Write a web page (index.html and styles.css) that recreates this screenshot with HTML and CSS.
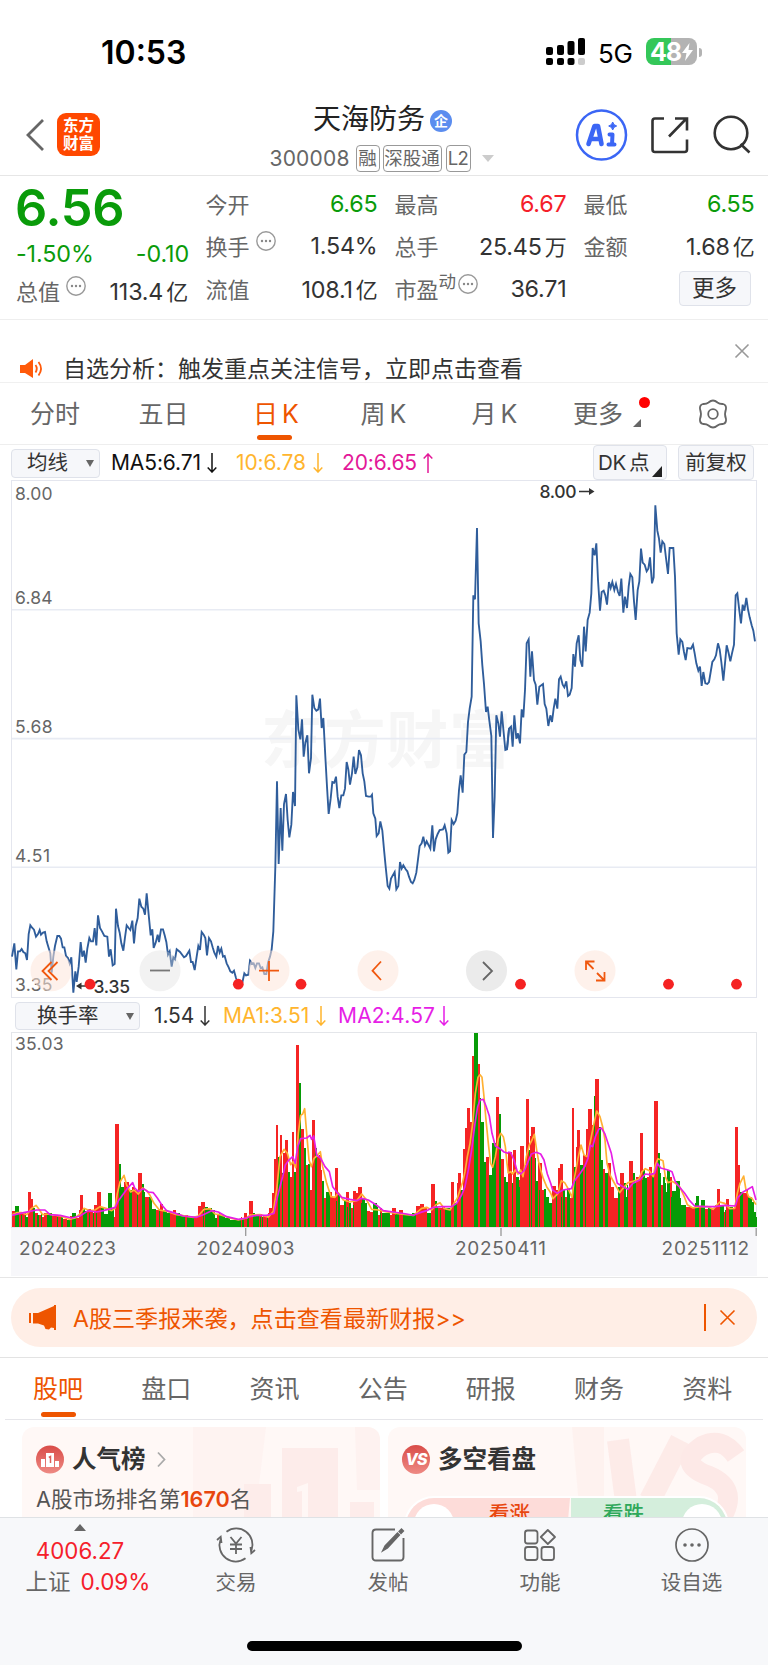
FILE: index.html
```html
<!DOCTYPE html>
<html lang="zh-CN">
<head>
<meta charset="utf-8">
<title>天海防务 300008</title>
<link rel="stylesheet" href="styles.css">
</head>
<body>
<svg class="defs" width="0" height="0">
  <symbol id="dots" viewBox="0 0 20 20"><circle cx="10" cy="10" r="9.200" fill="none" stroke="#999" stroke-width="1.400"/><circle cx="6" cy="10" r="1.200" fill="#888"/><circle cx="10" cy="10" r="1.200" fill="#888"/><circle cx="14" cy="10" r="1.200" fill="#888"/></symbol>
  <symbol id="down" viewBox="0 0 10 20"><path d="M5 0V19M.7 14.5L5 19L9.3 14.5" fill="none" stroke="currentColor" stroke-width="1.500"/></symbol>
  <symbol id="up" viewBox="0 0 10 20"><path d="M5 20V1M.7 5.500L5 1L9.300 5.500" fill="none" stroke="currentColor" stroke-width="1.500"/></symbol>
</svg>
<div class="screen">
  <header class="status">
    <span class="clock">10:53</span>
    <svg class="signal" width="40" height="28" viewBox="0 0 40 28"><g fill="#000"><rect x="0" y="9" width="7" height="8" rx="2"/><rect x="11" y="7" width="7" height="10" rx="2"/><rect x="21.500" y="3" width="7" height="14" rx="2"/><rect x="32" y="0" width="7" height="17" rx="2"/><rect x="0" y="20" width="7" height="7" rx="2"/><rect x="11" y="20" width="7" height="7" rx="2"/><rect x="21.500" y="20" width="7" height="7" rx="2"/></g><rect x="32" y="20" width="7" height="7" rx="2" fill="#ccc"/></svg>
    <span class="net">5G</span>
    <span class="battery">48<svg width="11" height="20" viewBox="0 0 11 18"><path d="M7.500 0L0 10H4.500L3 18L11 7H6.500Z" fill="#fff"/></svg></span><i class="cap"></i>
  </header>

  <header class="head">
    <svg class="back" width="19" height="32" viewBox="0 0 19 32"><path d="M17 1L2 16L17 31" fill="none" stroke="#666" stroke-width="2.800"/></svg>
    <div class="logo"><span>东方</span><span>财富</span></div>
    <div class="title">
      <div class="name">天海防务<span class="qi">企</span></div>
      <div class="code"><span class="num">300008</span><span class="tag">融</span><span class="tag tag-w">深股通</span><span class="tag tag-l">L2</span><i class="tri"></i></div>
    </div>
    <svg class="acts" width="180" height="56" viewBox="572 107 180 56">
      <circle cx="601.5" cy="135" r="24.500" fill="#fff" stroke="#3b66f5" stroke-width="2.500"/>
      <g fill="none" stroke="#3b66f5" stroke-linejoin="round" stroke-linecap="round"><path d="M588.500 144L594.500 126H598L601.500 144M591.500 139H600" stroke-width="4.600"/><path d="M609.500 134.500H612.500L612 144.500M608.500 144.500H614.500" stroke-width="4"/></g>
      <path d="M612.700 122Q613.400 125.300 616.700 126Q613.400 126.700 612.700 130Q612 126.700 608.700 126Q612 125.300 612.700 122Z" fill="#3b66f5" stroke="#3b66f5"/>
      <g fill="none" stroke="#333" stroke-width="2.600"><path d="M664 118.500H655Q652.500 118.500 652.500 121V149.500Q652.500 152 655 152H684.500Q687 152 687 149.500V139.500M669 136.500L686 119M675 118.500H687V130.500"/><circle cx="731" cy="133" r="16.300"/><path d="M740.500 144L749.500 152.500"/></g>
    </svg>
  </header>

  <section class="quote">
    <div class="q-main">
      <div class="price">6.56</div>
      <div class="chg"><span>-1.50%</span><span>-0.10</span></div>
      <div class="cell q-cap"><span class="lb">总值<svg class="ell" width="20" height="20"><use href="#dots"/></svg></span><b>113.4<em>亿</em></b></div>
    </div>
    <div class="q-grid">
      <div class="cell"><span class="lb">今开</span><b class="g">6.65</b></div>
      <div class="cell"><span class="lb">最高</span><b class="r">6.67</b></div>
      <div class="cell"><span class="lb">最低</span><b class="g">6.55</b></div>
      <div class="cell"><span class="lb">换手<svg class="ell" width="20" height="20"><use href="#dots"/></svg></span><b>1.54%</b></div>
      <div class="cell"><span class="lb">总手</span><b>25.45<em>万</em></b></div>
      <div class="cell"><span class="lb">金额</span><b>1.68<em>亿</em></b></div>
      <div class="cell"><span class="lb">流值</span><b>108.1<em>亿</em></b></div>
      <div class="cell"><span class="lb">市盈<sup>动</sup><svg class="ell ell-t" width="20" height="20"><use href="#dots"/></svg></span><b>36.71</b></div>
      <div class="cell cell-btn"><span class="more">更多</span></div>
    </div>
  </section>

  <section class="notice">
    <svg class="spk" width="24" height="20" viewBox="0 0 24 20"><path d="M0 6H5L13 0V19L5 14H0Z" fill="#ff5a0a"/><path d="M15.500 6Q18 9.500 15.500 13.500M18.500 3Q23.500 9.500 18.500 16.500" fill="none" stroke="#ff5a0a" stroke-width="1.800"/></svg>
    <span class="n-text">自选分析：触发重点关注信号，立即点击查看</span>
    <svg class="n-x" width="14" height="14" viewBox="0 0 14 14"><path d="M.5 .5L13.500 13.500M13.500 .5L.5 13.500" stroke="#999" stroke-width="1.600"/></svg>
  </section>

  <nav class="periods">
    <span>分时</span><span>五日</span><span class="on">日<i class="k">K</i></span><span>周<i class="k">K</i></span><span>月<i class="k">K</i></span><span class="p-more">更多<i class="corner"></i><i class="red"></i></span>
    <svg class="gear" width="30" height="30" viewBox="-15 -15 30 30"><path d="M-4.500 -11.500Q0 -15.500 4.500 -11.500Q6.500 -9.800 10 -10Q13.500 -9 13 -5Q11 0 13 5Q13.500 9 10 10Q6.500 9.800 4.500 11.500Q0 15.500 -4.500 11.500Q-6.500 9.800 -10 10Q-13.500 9 -13 5Q-11 0 -13 -5Q-13.500 -9 -10 -10Q-6.500 -9.800 -4.500 -11.500Z" fill="none" stroke="#666" stroke-width="1.800"/><circle r="4.800" fill="none" stroke="#666" stroke-width="1.800"/></svg>
  </nav>

  <section class="ind ind1">
    <span class="sel">均线<i class="caret"></i></span>
    <span class="v">MA5:6.71</span><svg class="ar" width="10" height="20"><use href="#down"/></svg>
    <span class="v or">10:6.78</span><svg class="ar or" width="10" height="20"><use href="#down"/></svg>
    <span class="v pk">20:6.65</span><svg class="ar pk" width="10" height="20"><use href="#up"/></svg>
    <span class="btn btn-dk">DK<em>点</em><i class="corner big"></i></span>
    <span class="btn">前复权</span>
  </section>

  <svg class="chart" width="768" height="520" viewBox="0 480 768 520">
    <rect x="11.500" y="480.500" width="745" height="517" fill="#fff" stroke="#e4e6ee"/>
    <text class="wm" x="261" y="763" textLength="250">东方财富</text>
    <g stroke="#e8ebf3" stroke-width="1.600"><path d="M12 609.700H756M12 738.600H756M12 867.300H756"/></g>
    <g fill="none" stroke="#2f5d9b" stroke-width="5.600" stroke-linejoin="miter">
      <polyline transform="translate(0 480) scale(.33333)" points="36,1430 43,1390 49,1468 54,1414 60,1414 65,1407 70,1416 76,1420 81,1440 86,1362 91,1336 97,1344 102,1349 108,1370 114,1362 119,1350 123,1364 129,1358 135,1356 140,1384 146,1404 151,1420 155,1478 160,1430 165,1398 172,1368 178,1368 183,1376 188,1402 193,1402 198,1428 204,1434 209,1450 214,1432 220,1538 226,1474 230,1506 236,1460 242,1386 247,1430 252,1412 257,1448 262,1406 268,1374 273,1384 279,1384 284,1344 289,1396 294,1306 300,1344 306,1354 313,1368 322,1370 327,1430 332,1408 338,1456 344,1452 348,1286 354,1338 359,1358 364,1390 370,1412 375,1372 380,1336 386,1344 391,1350 397,1322 402,1390 407,1338 413,1314 418,1256 424,1280 430,1286 435,1304 440,1240 446,1304 452,1366 457,1348 461,1404 467,1388 473,1364 477,1386 483,1348 489,1348 494,1366 499,1386 504,1424 509,1414 515,1460 520,1432 525,1438 530,1408 540,1416 552,1432 558,1428 568,1412 573,1446 578,1446 584,1470 590,1430 595,1398 600,1410 605,1356 611,1364 616,1374 621,1426 627,1374 633,1384 638,1402 643,1418 649,1430 654,1398 659,1418 664,1406 669,1430 674,1428 680,1450 686,1462 691,1474 697,1478 702,1472 708,1494 714,1510 720,1506 727,1508 733,1480 738,1486 745,1484 750,1442 756,1450 761,1450"/>
      <polyline transform="translate(250 480) scale(.33333)" points="0,1440 4,1452 11,1450 16,1464 21,1450 27,1450 32,1464 37,1462 43,1482 49,1482 54,1448 60,1430 65,1408 70,1354 76,1160 81,904 86,1152 92,984 97,1112 102,972 108,942 113,1020 118,1072 124,1034 129,936 135,978 139,646 145,748 151,778 156,718 161,830 166,788 172,766 177,880 183,834 187,644 193,684 199,692 205,688 210,656 215,744 220,714 226,830 231,920 236,1002 242,956 247,906 253,908 258,890 263,950 268,984 274,946 280,946 285,926 290,846 295,868 300,914 306,880 311,830 316,882 322,862 327,810 333,826 338,880 343,904 348,948 356,950 362,950 366,944 370,1000 376,1016 380,1068 386,1060 391,1024 397,1052 402,1108 407,1160 413,1218 418,1226 423,1196 434,1176 439,1228 445,1218 450,1146 455,1166 460,1156 467,1168 472,1174 477,1190 483,1206 488,1210 493,1200 499,1178 504,1138 509,1098 515,1090 520,1070 525,1096 530,1084 541,1106 547,1036 552,1114 557,1078 563,1062 569,1050 579,1048 584,1036 590,1060 595,1118 600,1114 605,1020 611,1032 617,1022 622,1000 627,930 632,886 638,938 643,824 649,816 654,726 659,686 665,650 670,346 675,358 681,144 686,430 692,484 697,556 702,612 708,696 713,680 718,722 724,768 729,1074 734,950 739,706 745,730 750,770 755,694 761,758 766,810 771,808 777,746"/>
      <polyline transform="translate(508 480) scale(.33333)" points="-3,808 3,746 9,740 14,800 19,706 25,776 30,760 36,790 41,688 46,712 51,630 56,490 62,478 67,590 72,514 78,600 83,614 88,674 94,620 105,612 110,672 115,686 121,738 127,706 132,726 137,686 142,656 148,686 153,598 158,590 164,614 169,622 175,604 180,648 185,644 191,624 196,522 201,560 206,490 212,466 217,540 223,560 228,440 233,514 239,420 245,398 250,340 254,204 260,226 265,190 270,300 276,392 281,336 287,332 292,346 297,374 303,306 308,324 313,306 319,330 324,312 330,336 335,348 340,296 346,398 351,350 357,384 362,320 367,282 373,292 378,364 383,420 389,330 394,304 399,206 404,248 410,254 416,274 421,266 426,232 432,310 437,292 442,76 448,152 453,176 458,218 463,184 469,192 474,234 480,282 485,204 496,204 501,290 506,460 512,524 517,478 523,486 528,516 533,540 538,504 549,506 555,494 560,520 565,550 571,572 576,560 581,618 586,576 592,610 598,612 603,606 608,576 613,546 619,538 624,526 630,490 635,508 640,546 646,602 651,550 656,496 662,520 667,544 672,520 678,494 683,346 688,340 694,392 699,430 704,374 709,392 715,354 720,388 725,412 731,436 736,452 741,484"/>
    </g>
    <g class="axis">
      <text x="15" y="500" textLength="37.500">8.00</text><text x="15" y="604" textLength="37.500">6.84</text><text x="15" y="733" textLength="37.500">5.68</text><text x="15" y="862" textLength="35">4.51</text><text x="15" y="991" textLength="37.500">3.35</text>
    </g>
    <g class="mark"><text x="539.500" y="498" textLength="37">8.00</text><text x="93.500" y="992.500" textLength="36.500">3.35</text></g>
    <g fill="#333"><path d="M579 490.800H589V488L594.500 491.500L589 495V492.200H579ZM88 985.300H81.500V982.500L76 986L81.500 989.500V986.700H88Z"/></g>
    <g fill="#fde6da" fill-opacity=".55"><circle cx="51" cy="970.700" r="20.500"/><circle cx="269" cy="970.700" r="20.500"/><circle cx="378" cy="970.700" r="20.500"/><circle cx="595" cy="970.700" r="20.500"/></g>
    <circle cx="160" cy="970.700" r="20.500" fill="#dcdcdc" fill-opacity=".36"/><circle cx="486.500" cy="970.700" r="20.500" fill="#ebebeb"/>
    <g fill="none" stroke="#f0580f" stroke-width="1.800"><path d="M51.500 962L42.500 971L51.500 980M57.500 962L48.500 971L57.500 980M259 970.700H279M269 961V981M381 961.500L372.500 970.700L381 980M593.500 969L586 961.500M586 970V961.500H594.500M597 973L604.500 980.500M604.500 972V980.500H596"/></g>
    <path d="M150 970.500H170" stroke="#777" stroke-width="1.800"/><path d="M483 962L492 971L483 980" fill="none" stroke="#666" stroke-width="1.800"/>
    <g fill="#f52222"><circle cx="90" cy="984.200" r="5.400"/><circle cx="238.300" cy="984.200" r="5.400"/><circle cx="301" cy="984.200" r="5.400"/><circle cx="520.500" cy="984.200" r="5.400"/><circle cx="668.500" cy="984.200" r="5.400"/><circle cx="736.500" cy="984.200" r="5.400"/></g>
  </svg>

  <section class="ind ind2">
    <span class="sel">换手率<i class="caret"></i></span>
    <span class="v dk">1.54</span><svg class="ar dk" width="10" height="20"><use href="#down"/></svg>
    <span class="v or">MA1:3.51</span><svg class="ar or" width="10" height="20"><use href="#down"/></svg>
    <span class="v mg">MA2:4.57</span><svg class="ar mg" width="10" height="20"><use href="#down"/></svg>
  </section>

  <svg class="chart" width="768" height="245" viewBox="0 1032 768 245">
    <rect x="11.500" y="1032.500" width="745" height="195" fill="#fff" stroke="#e4e6ea"/>
    <rect x="11" y="1228" width="746" height="48" fill="#f7f7fa"/>
    <g id="bars" shape-rendering="crispEdges"></g>
    <g fill="none" stroke-width="5" stroke-linejoin="round">
      <g transform="translate(0 990) scale(.33333)"><polyline stroke="#ffb133" points="36,674 50,668 65,668 80,674 95,655 108,646 117,658 128,674 145,672 180,678 208,688 225,684 240,672 252,655 270,662 285,660 300,650 318,655 335,662 345,655 352,610 360,576 372,556 380,585 392,606 402,600 415,612 428,594 440,602 450,616 462,640 478,660 500,664 530,674 580,682 595,678 612,658 630,656 645,672 660,674 690,684 715,690 740,684 752,674"/><polyline stroke="#e61ee6" points="36,676 60,670 90,664 110,660 135,660 150,674 180,676 215,684 240,678 265,662 290,666 310,662 335,655 346,652 355,632 370,612 385,592 398,578 404,594 415,604 430,596 445,606 460,608 472,624 485,644 500,662 520,668 550,678 590,682 610,674 635,662 655,666 680,680 715,688 740,684 752,679"/></g>
      <g transform="translate(250 990) scale(.33333)"><polyline stroke="#ffb133" points="0,675 30,674 55,682 70,664 80,600 90,500 102,478 112,490 122,524 130,515 137,533 145,430 152,376 158,372 164,356 170,430 177,510 184,530 192,505 200,498 211,485 218,530 230,580 243,620 255,622 265,608 280,630 300,636 320,632 335,612 350,630 365,658 385,660 410,666 450,672 490,676 500,668 515,655 530,652 545,660 558,644 570,638 582,655 600,660 612,640 622,625 630,600 637,580 645,545 652,500 660,460 668,400 676,310 684,262 690,254 696,262 702,320 708,390 716,470 722,520 728,532 736,500 745,445 752,430 760,440 766,470 771,520 775,550"/><polyline stroke="#e61ee6" points="0,680 20,676 50,676 72,670 80,630 90,590 98,560 106,525 115,512 128,500 136,520 143,470 152,446 170,444 180,436 185,448 191,438 200,495 212,505 225,530 238,545 248,590 262,608 275,622 300,628 320,632 335,625 355,630 378,644 400,662 430,666 470,672 490,676 510,668 530,662 550,652 575,650 605,650 620,640 635,615 645,590 655,540 665,480 675,400 683,350 690,330 700,328 708,348 718,378 726,430 736,468 750,476 762,486 775,490"/></g>
      <g transform="translate(508 990) scale(.33333)"><polyline stroke="#ffb133" points="0,550 8,545 14,552 22,540 30,552 38,540 45,560 55,500 64,465 72,450 79,433 86,480 92,515 98,540 106,566 116,590 126,605 135,626 150,610 160,572 170,578 180,595 192,622 200,560 210,505 219,465 228,495 238,500 248,450 258,400 266,363 276,380 284,410 291,450 297,520 306,555 314,570 325,590 335,608 345,595 360,578 375,574 392,568 402,545 412,536 424,542 436,560 442,525 450,506 465,512 472,560 480,578 492,574 502,580 515,590 528,618 538,644 555,654 575,650 600,650 615,658 635,636 650,640 665,656 680,655 688,610 696,580 707,558 714,600 722,620 732,625 744,644"/><polyline stroke="#e61ee6" points="0,486 8,488 18,510 28,545 38,552 50,540 60,515 70,492 85,487 98,492 108,510 118,552 128,580 134,600 148,610 165,600 190,596 200,572 215,552 230,530 240,505 247,466 254,470 262,440 272,418 280,414 290,430 300,460 310,490 320,545 328,580 345,590 360,598 375,580 395,570 412,552 425,554 440,550 448,520 458,534 480,540 492,545 502,575 515,592 530,610 545,632 560,648 590,650 620,650 650,646 682,648 690,622 705,606 720,598 733,590 744,630"/></g>
    </g>
    <path d="M245.700 1228V1236M501 1228V1236M756.200 1228V1236" stroke="#999" stroke-width="1.300"/>
    <text class="vol" x="15" y="1050" textLength="48.500">35.03</text>
    <g class="date"><text x="19" y="1255" textLength="97">20240223</text><text x="196.500" y="1255" textLength="98">20240903</text><text x="455" y="1255" textLength="91">20250411</text><text x="661.500" y="1255" textLength="87.500">20251112</text></g>
  </svg>

  <section class="promo-wrap">
    <div class="promo">
      <svg width="28" height="25" viewBox="0 0 28 25"><path d="M0 8H2V18H0ZM4 8H9L25 1V0H27V25H25V23L22 22.500L20 24.500L16.500 24L15 20.500L9 18.500H4Z" fill="#ee5500"/></svg>
      <span class="promo-t">A股三季报来袭，点击查看最新财报&gt;&gt;</span>
      <i class="bar"></i>
      <svg width="15" height="15" viewBox="0 0 15 15"><path d="M.5 .5L14.500 14.500M14.500 .5L.5 14.500" stroke="#ee5500" stroke-width="1.600"/></svg>
    </div>
  </section>

  <nav class="tabs"><span class="on">股吧</span><span>盘口</span><span>资讯</span><span>公告</span><span>研报</span><span>财务</span><span>资料</span></nav>

  <section class="cards">
    <div class="card">
      <svg class="deco" width="358" height="90" viewBox="22 1427 358 90"><g fill="#fde9e6" opacity=".75"><path d="M193 1427H266L255 1517H193Z" opacity=".4"/><path d="M282 1448H338V1517H282ZM244 1484H271V1517H244ZM350 1502H374V1517H350Z"/><path d="M355 1427H380V1490H357Z" opacity=".5"/></g><path d="M297 1487L308 1483V1517H302V1491L297 1492Z" fill="#fff7f5"/></svg>
      <div class="c-head"><svg width="28" height="29" viewBox="0 0 28 29"><circle cx="14" cy="14.500" r="14" fill="url(#rd)"/><path d="M5 14H9V22H5ZM10 8H18V22H10ZM19 16H23V22H19Z" fill="#fff"/><path d="M12.800 12.500L14.500 11.500V18" stroke="#dd605a" stroke-width="1.500" fill="none"/><defs><linearGradient id="rd" x2="0" y2="1"><stop stop-color="#d94c48"/><stop offset="1" stop-color="#ee8a84"/></linearGradient></defs></svg><h3>人气榜</h3><svg width="9" height="15" viewBox="0 0 9 15"><path d="M1 .5L7.500 7.500L1 14.500" fill="none" stroke="#aaa" stroke-width="1.800"/></svg></div>
      <div class="rank">A股市场排名第<strong>1670</strong>名</div>
    </div>
    <div class="card">
      <svg class="deco" width="358" height="90" viewBox="388 1427 358 90"><g fill="none" stroke="#fde9e7" stroke-width="22"><path d="M618 1440L628 1517M681 1440L650 1500" opacity=".9"/><path d="M736 1456Q722 1436 702 1446Q678 1462 704 1474Q740 1486 722 1517" stroke-width="20"/></g><path d="M572 1427H604V1517H580Z" fill="#fdeeeb" opacity=".6"/></svg>
      <div class="c-head"><span class="vs">VS</span><h3>多空看盘</h3></div>
      <div class="vote"><span class="up"><i></i>看涨</span><span class="dn">看跌<i></i></span></div>
    </div>
  </section>

  <footer class="dock">
    <div class="idx"><i class="tri-up"></i><span class="pts">4006.27</span><span class="pct">上证<b>0.09%</b></span></div>
    <div class="it"><svg width="40" height="36" viewBox="-20 -18 40 36"><g fill="none" stroke="#666" stroke-width="1.800"><path d="M-9.500 -13.300A16.300 16.300 0 0 1 15.500 5.500M9.500 13.300A16.300 16.300 0 0 1 -15.500 -5.500M-19 -5L-15.300 -8.300L-14.500 -2M19 5L15.300 8.300L14.500 2"/><path d="M-5.500 -8L0 -1.500L5.500 -8M0 -1.500V9M-6 -.5H6M-6 4H6"/></g></svg>交易</div>
    <div class="it"><svg width="36" height="36" viewBox="-18 -18 36 36"><path d="M7 -15.500H-12Q-15.500 -15.500 -15.500 -12V12Q-15.500 15.500 -12 15.500H12Q15.500 15.500 15.500 12V-7" fill="none" stroke="#666" stroke-width="1.900"/><path d="M-5.500 6L-3 1L9.500 -12L11.500 -10L-.5 3ZM11 -13.500L13.500 -16L15.500 -14L13 -11.500Z" fill="#666" stroke="#666" stroke-width="1.300"/></svg>发帖</div>
    <div class="it"><svg width="36" height="36" viewBox="-18 -18 36 36"><g fill="none" stroke="#666" stroke-width="1.800"><rect x="-15" y="-14.500" width="12.500" height="13" rx="2.500"/><rect x="-15" y="2" width="12.500" height="13" rx="2.500"/><rect x="1.500" y="2" width="12.500" height="13" rx="2.500"/><path d="M7.800 -15L15 -8L7.800 -1L.8 -8Z" stroke-linejoin="round"/></g></svg>功能</div>
    <div class="it"><svg width="36" height="36" viewBox="-18 -18 36 36"><circle r="16" fill="none" stroke="#666" stroke-width="1.700"/><circle cx="-7" r="1.800" fill="#666"/><circle r="1.800" fill="#666"/><circle cx="7" r="1.800" fill="#666"/></svg>设自选</div>
    <i class="home"></i>
  </footer>
</div>
<script src="bars.js"></script>
</body>
</html>
```
FILE: styles.css
```css
* { box-sizing: border-box; }
body { margin: 0; background: #fff; font-family: Inter, "Noto Sans CJK SC", sans-serif; color: #333; }
i, em { font-style: normal; }
svg { display: block; flex: none; overflow: visible; }
.defs { position: absolute; }
.screen { width: 768px; height: 1665px; overflow: hidden; display: flex; flex-direction: column; white-space: nowrap; }
.screen > * { flex: none; }

.status { height: 104px; padding: 2px 66px 0 101px; display: flex; align-items: center; color: #000; }
.clock { font-size: 32px; font-weight: 600; width: 445px; line-height: 40px; }
.net { font-size: 26px; margin-left: 12px; width: 48px; letter-spacing: -.3px; }
.signal { margin-top: -3px; }
.battery { width: 51px; height: 27px; margin-top: -3px; border-radius: 8px; background: linear-gradient(90deg, #34c759 49%, #b3b3b3 49%); color: #fff; font-weight: 700; font-size: 25px; letter-spacing: -1px; display: flex; align-items: center; justify-content: center; gap: 1px; }
.cap { width: 3px; height: 9px; margin: -2px 0 0 2px; background: #b3b3b3; border-radius: 0 3px 3px 0; }

.head { height: 72px; border-bottom: 1px solid #e6e6e6; display: flex; align-items: flex-start; }
.back { margin: 15px 12px 0 26px; }
.acts { margin-top: 3px; }
.logo { width: 43px; height: 43px; margin-top: 9px; border-radius: 9px; background: #ff4800; color: #fff; font-weight: 700; font-size: 15.500px; line-height: 17.500px; display: flex; flex-direction: column; align-items: center; justify-content: center; }
.title { width: 472px; padding-left: 170px; }
.name { display: flex; align-items: center; height: 31px; font-size: 28px; line-height: 31px; color: #222; margin-left: 43px; }
.qi { width: 22px; height: 22px; margin-top: 2px; border-radius: 50%; background: #5b8def; color: #fff; font-size: 14px; font-weight: 700; line-height: 21px; text-align: center; margin-left: 5px; }
.code { display: flex; align-items: center; height: 28px; margin-top: 9px; color: #666; font-size: 21px; }
.num { width: 86px; letter-spacing: .2px; margin-left: -.5px; }
.tag { width: 24px; height: 27px; border: 1.500px solid #999; border-radius: 4px; font-size: 18.500px; line-height: 24px; text-align: center; margin-right: 3px; }
.tag-w { width: 59px; margin-right: 4px; }
.tag-l { width: 25px; margin-right: 11px; letter-spacing: -.5px; }
.tri { border: 6px solid transparent; border-top: 7px solid #ccc; border-bottom: 0; }

.quote { height: 144px; border-bottom: 1px solid #eee; display: flex; padding: 0 12px 0 17px; }
.q-main { width: 171px; margin-right: 17.500px; }
.price { height: 60px; padding-top: 2px; margin-left: -2px; line-height: 60px; font-size: 50.500px; font-weight: 600; color: #0a9b0a; letter-spacing: -.3px; }
.chg { height: 34px; margin-left: -1px; margin-right: -1px; display: flex; justify-content: space-between; align-items: center; font-size: 23.300px; color: #0a9b0a; letter-spacing: -.1px; }
.q-grid { display: grid; grid-template-columns: 172px 172px 171px; column-gap: 17px; grid-template-rows: 42px 43px 42px; padding-top: 6px; }
.cell { display: flex; justify-content: space-between; align-items: center; font-size: 23.300px; height: 42px; }
.q-cap { margin-top: -1px; margin-left: -1px; }
.cell b { font-weight: 400; letter-spacing: -.2px; }
.cell em { font-size: 22px; margin-left: 3px; }
.cell .g { color: #0a9b0a; }
.cell .r { color: #f5202a; }
.lb { font-size: 22px; color: #666; display: flex; align-items: center; }
.ell { margin: -9px 0 0 6px; }
.ell-t { margin-left: 2px; }
sup { font-size: 17.500px; line-height: 20px; margin-top: -12px; }
.cell-btn { justify-content: flex-end; padding-right: 4px; }
.more { width: 72px; height: 35px; border: 1px solid #dfe2ea; border-radius: 4px; background: #f6f7fa; font-size: 22.500px; line-height: 31px; text-align: center; }

.notice { height: 63px; border-bottom: 1px solid #f0f0f0; display: flex; padding: 0 19px 0 20px; }
.spk { margin: 39px 19px 0 0; }
.n-text { width: 672px; font-size: 23px; line-height: 30px; margin-top: 34px; }
.n-x { margin-top: 24px; }

.periods { height: 62px; border-bottom: 1px solid #eee; display: grid; grid-template-columns: 110px 107px 118px 97px 125px 82px 129px; align-items: center; justify-items: center; font-size: 25px; color: #666; }
.periods span { position: relative; line-height: 60px; }
.periods .k { margin-left: 4px; }
.gear { margin-left: 19px; }
.periods .on, .tabs .on { color: #ee5500; }
.periods .on::after, .tabs .on::after { content: ""; position: absolute; left: 50%; bottom: 4px; width: 35px; height: 5px; margin-left: -18px; border-radius: 3px; background: #ee5500; }
.periods .on::after { margin-left: -19px; }
.p-more .corner { position: absolute; left: 60px; top: 35px; }
.corner { width: 0; height: 0; border-left: 8px solid transparent; border-bottom: 8px solid #666; }
.red { position: absolute; left: 66px; top: 13px; width: 11px; height: 11px; border-radius: 50%; background: #f00; }

.ind { display: flex; align-items: center; font-size: 21px; line-height: 30px; }
.ind1 { height: 35px; padding: 1px 0 0 11px; color: #111; }
.sel { display: flex; align-items: center; justify-content: space-between; width: 89px; height: 29px; border: 1px solid #dfe2ea; border-radius: 4px; background: #f6f7fa; padding: 0 5px 0 15px; font-size: 20.500px; color: #333; margin-right: 11px; }
.caret { border: 4.500px solid transparent; border-top: 7px solid #666; border-bottom: 0; }
.v { width: 96px; letter-spacing: -.1px; }
.ar { margin-right: 19px; }
.ind1 .v.or { width: 77px; }
.ind1 .v.pk { width: 81px; }
.or { color: #ffb52e; }
.pk { color: #e31898; }
.mg { color: #e61ee6; }
.dk { color: #333; }
.btn { width: 76px; height: 35px; margin-top: -1px; border: 1px solid #dfe2ea; border-radius: 4px; background: #f6f7fa; font-size: 20.500px; line-height: 34px; text-align: center; color: #333; }
.ind1 .ar.pk { margin-right: 160px; }
.btn-dk { width: 74px; margin-right: 11px; display: flex; align-items: center; padding-left: 4px; letter-spacing: -.3px; }
.btn-dk em { margin-left: 3px; }
.big { border-left-width: 10px; border-bottom: 11px solid #222; margin: 18px 0 0 3px; }

.chart { font-family: Inter, "Noto Sans CJK SC", sans-serif; overflow: hidden; }
.wm { font-size: 62px; font-weight: 700; fill: #f6f6f6; }
.axis, .vol { font-size: 17.500px; fill: #666; }
.mark { font-size: 17.500px; font-weight: 500; fill: #333; }
.date { font-size: 19px; fill: #666; }
.ind2 { height: 32px; padding-left: 15px; }
.ind2 .sel { width: 125px; height: 28px; padding-left: 21px; margin-right: 14px; }
.ind2 .v { width: 93px; }
.ind2 .v.dk { width: 46px; }
.ind2 .ar { margin-right: 13px; }
.ind2 .ar.or { margin-right: 12px; }
.ind2 .v.mg { width: 101px; letter-spacing: .2px; }

.promo-wrap { height: 81px; padding: 10px 11px; border-top: 1px solid #e6e6e6; border-bottom: 1px solid #e3e3e3; }
.promo { height: 59px; border-radius: 30px; background: #ffeee6; color: #ee5500; display: flex; align-items: center; padding-left: 18px; font-size: 23.100px; }
.promo-t { width: 631px; margin: -2px 0 0 16px; }
.bar { width: 1.500px; height: 27px; background: #ee5500; margin-right: 14px; }

.tabs { height: 62px; margin: 0 5px; border-bottom: 1px solid #e6e6ea; display: grid; grid-template-columns: repeat(7, 108.200px); font-size: 25px; line-height: 63px; color: #666; text-align: center; }
.tabs span { position: relative; left: -1px; }
.tabs .on::after { margin-left: -17px; }

.cards { height: 97px; padding: 7px 22px 0; display: flex; gap: 8px; overflow: hidden; }
.card { position: relative; width: 358px; height: 140px; border-radius: 12px; background: #fff8f6; padding: 14px; overflow: hidden; }
.deco { position: absolute; left: 0; top: 0; }
.c-head { position: relative; display: flex; align-items: center; height: 36px; gap: 8px; }
h3 { margin: 0 3px 0 0; font-size: 24.500px; font-weight: 600; line-height: 36px; }
.rank { position: relative; margin-top: 7px; font-size: 21.600px; line-height: 30px; color: #555; }
.rank strong { color: #e8460e; font-weight: 600; }
.vs { width: 28px; height: 29px; border-radius: 50%; background: linear-gradient(#d94c48, #ee8a84); color: #fff; font-size: 16px; font-weight: 800; font-style: italic; line-height: 28px; text-align: center; letter-spacing: -1px; }
.vote { position: relative; display: flex; gap: 1px; width: 325px; height: 60px; margin: 19px 0 0 2px; border: 2px solid #fff; border-radius: 30px; overflow: hidden; font-size: 20.500px; font-weight: 500; line-height: 31px; }
.vote span { display: flex; }
.vote i { width: 40px; height: 40px; border-radius: 50%; background: #fff; margin-top: 6px; }
.up { width: 164px; background: #fddcd9; color: #e8460e; padding-left: 8px; gap: 35px; clip-path: polygon(0 0, 100% 0, calc(100% - 5px) 100%, 0 100%); }
.dn { flex: 1; background: #d4eedc; color: #2fa85a; padding-left: 32px; gap: 38px; }

.dock { position: relative; height: 149px; border-top: 1px solid #dfe2e5; background: #f7f8fa; display: grid; grid-template-columns: 160px 152px 152px 152px 151px; color: #666; font-size: 20.500px; }
.idx { display: flex; flex-direction: column; align-items: center; padding-top: 6px; line-height: 30px; }
.tri-up { border: 6.500px solid transparent; border-bottom: 7px solid #666; border-top: 0; }
.pts { color: #f5202a; font-size: 22.300px; margin-top: 5px; height: 31px; }
.pct { font-size: 22.500px; display: flex; gap: 10px; padding-left: 16px; }
.pct b { color: #f5202a; font-weight: 400; }
.it { display: flex; flex-direction: column; align-items: center; padding-top: 9px; line-height: 30px; gap: 5px; }
.home { position: absolute; left: 247px; top: 123px; width: 275px; height: 10px; border-radius: 5px; background: #000; }
```
FILE: bars.js
```js
// Turnover bars. Each token is: start x, colour (r/g), top y, in thirds of a pixel.
const groups = [
  [0, 750, "36r664 46g648 57r668 68r670 79g682 84r606 94r628 100g655 106r668 114g674 118r676 122g670 127r680 133r668 140g670 156r678 183g682 190r688 200g690 210r678 216g668 228r684 236r660 240r616 249g654 255g662 260r658 272r664 279g668 282r645 292r607 302g650 312g672 325g608 335g655 343r682 346r403 356g523 362g590 372r577 388g600 396r590 404r600 415r549 425g583 431g605 436r620 446g620 456g656 467r660 477g656 480r641 490g660 500g670 510r670 518r660 528g670 540g678 556r674 565g680 575g682 583r680 593r648 603r637 614g650 624g655 635g660 646g684 651r676 657g670 664g676 676g684 690g690 722r680 727g684 733r670 742g682 748r633"],
  [250, 774, "0r633 8g670 16g674 27r672 35g680 40r674 50g684 55r668 57r654 67r610 73r508 78r404 84g500 89r435 95g550 100r490 105r450 115g545 121r562 127r426 132g545 137r166 147g278 153r417 162g475 168r525 174g522 181r600 185r391 195g474 202r500 207r495 212r540 216g572 222r625 228g605 239r605 245r620 255r534 265g612 270r645 282g630 287r606 298g638 303r655 308r603 318r610 324r590 335g625 346g640 351r662 360r665 369g640 380g650 385r676 390r655 396g670 420r674 426r655 437g670 447r660 458g672 485g670 497r647 510r643 522r655 532g668 543r581 554g633 560g650 564r655 575r650 586g655 602r576 612g640 620r580 624r549 634g600 640r477 645r415 651r353 661r395 667r199 673g129 683r222 689g325 694g397 703g516 708r500 718g555 727g460 737r321 747g372 753r506 763g560 769g575"],
  [508, 747, "0r486 11g580 16r480 25g562 32r570 37r468 47r525 53r326 63g480 66r438 70r412 80g505 85g573 90r520 101r600 107g597 115g620 124g640 133r587 145r600 151r534 156r521 166g600 171r620 177g595 185r625 192r353 198g530 203r470 208r421 217g525 225r495 235r418 241r356 251r405 257g318 262r266 272g410 278g510 284r538 290g548 300r518 310r590 319r625 330g590 337r550 347g580 353g620 358r595 364r514 374g548 380g580 385r560 396r428 406g540 412g565 417r560 424r531 433g550 438r334 449g488 455g550 460r585 466g560 471g605 477g540 487r560 492g603 503g572 515g625 520g646 535r650 560g640 563g618 573r648 580g630 590r658 600g655 610r655 620r645 627r597 637g645 648r665 654r627 664g650 675r655 680r410 690r525 696g605 704r610 715r600 721g620 732g635 738g665 744g680"]
];
const host = document.getElementById("bars");
for (const [offset, end, text] of groups) {
  const items = text.split(" ").map(t => t.match(/(\d+)([rg])(\d+)/).slice(1));
  items.forEach(([x, c, y], n) => {
    const next = n + 1 < items.length ? +items[n + 1][0] : end;
    const bar = document.createElementNS("http://www.w3.org/2000/svg", "rect");
    bar.setAttribute("x", offset + x / 3);
    bar.setAttribute("y", 990 + y / 3);
    bar.setAttribute("width", (next - x) / 3);
    bar.setAttribute("height", (711 - y) / 3);
    bar.setAttribute("fill", c === "r" ? "#f52424" : "#079b07");
    host.appendChild(bar);
  });
}
// Thin falling-day bars that sit between wider rising-day columns.
const stripes = [[62,675],[74,676],[110,676],[152,676],[170,680],[268,668],[288,668],[393,610],[412,616],[560,680],[608,655],[765,676],[781,680],[800,682],[983,612],[1008,632],[1042,652],[1060,645],[1084,638],[1140,668],[1184,674],[1216,676],[1288,670],[1320,660],[1340,662],[1386,600],[1478,540],[1556,590],[1594,500],[1617,600],[1668,612],[1684,620],[1742,540],[1754,530],[1882,585],[1926,570],[1996,580],[2012,620],[2088,660],[2176,660],[2226,620]];
for (const [x, y] of stripes) {
  const bar = document.createElementNS("http://www.w3.org/2000/svg", "rect");
  bar.setAttribute("x", x / 3);
  bar.setAttribute("y", 990 + y / 3);
  bar.setAttribute("width", 1);
  bar.setAttribute("height", (711 - y) / 3);
  bar.setAttribute("fill", "#079b07");
  host.appendChild(bar);
}
```
